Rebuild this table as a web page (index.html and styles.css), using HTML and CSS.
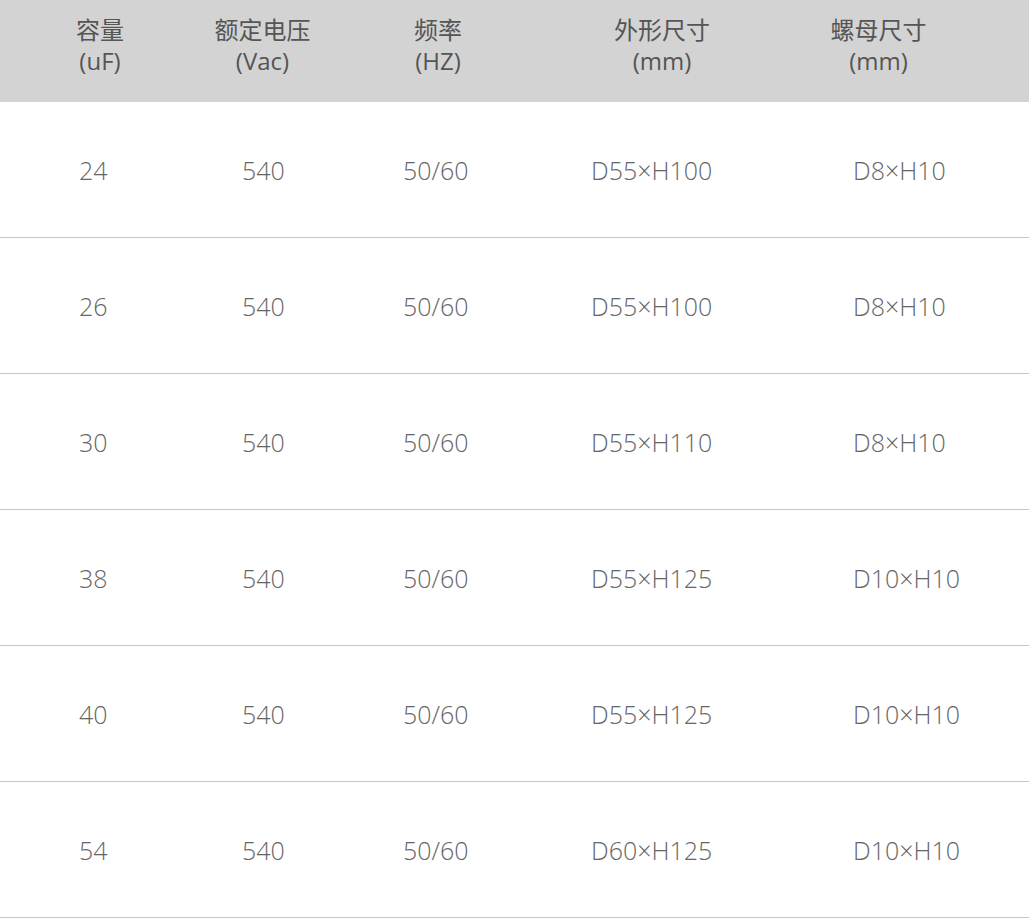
FILE: index.html
```html
<!DOCTYPE html>
<html lang="zh-CN">
<head>
<meta charset="utf-8">
<title>规格参数</title>
<link rel="stylesheet" href="styles.css">
</head>
<body>
<div class="spec">
  <div class="row head">
    <div class="cell">容量<br>(uF)</div>
    <div class="cell">额定电压<br>(Vac)</div>
    <div class="cell">频率<br>(HZ)</div>
    <div class="cell">外形尺寸<br>(mm)</div>
    <div class="cell">螺母尺寸<br>(mm)</div>
  </div>
  <div class="row">
    <div class="cell">24</div><div class="cell">540</div><div class="cell">50/60</div><div class="cell">D55×H100</div><div class="cell">D8×H10</div>
  </div>
  <div class="row">
    <div class="cell">26</div><div class="cell">540</div><div class="cell">50/60</div><div class="cell">D55×H100</div><div class="cell">D8×H10</div>
  </div>
  <div class="row">
    <div class="cell">30</div><div class="cell">540</div><div class="cell">50/60</div><div class="cell">D55×H110</div><div class="cell">D8×H10</div>
  </div>
  <div class="row">
    <div class="cell">38</div><div class="cell">540</div><div class="cell">50/60</div><div class="cell">D55×H125</div><div class="cell">D10×H10</div>
  </div>
  <div class="row">
    <div class="cell">40</div><div class="cell">540</div><div class="cell">50/60</div><div class="cell">D55×H125</div><div class="cell">D10×H10</div>
  </div>
  <div class="row">
    <div class="cell">54</div><div class="cell">540</div><div class="cell">50/60</div><div class="cell">D60×H125</div><div class="cell">D10×H10</div>
  </div>
</div>
</body>
</html>
```
FILE: styles.css
```css
html, body {
  margin: 0;
  padding: 0;
  background: #ffffff;
}

.spec {
  width: 1029px;
  font-family: "Open Sans", "Noto Sans CJK SC", sans-serif;
}

.row {
  display: grid;
  grid-template-columns: 200px 125px 226px 222px 211px 45px;
  height: 135px;
  border-bottom: 1px solid #c6c6c6;
  align-items: center;
  font-size: 25px;
  font-weight: 300;
  color: #666666;
}

.row .cell:nth-child(1) { padding-left: 79px; }
.row .cell:nth-child(2) { padding-left: 42px; }
.row .cell:nth-child(3) { padding-left: 78px; }
.row .cell:nth-child(4) { padding-left: 40px; }
.row .cell:nth-child(5) { padding-left: 80px; }

.row .cell {
  line-height: 1;
  padding-top: 2px;
}

.row.head {
  height: 102px;
  border-bottom: none;
  background: #d3d3d3;
  align-items: start;
  color: #555555;
  font-weight: 400;
  font-family: "Open Sans", "Noto Sans CJK SC", sans-serif;
}

.row.head .cell {
  padding: 14px 0 0 0;
  text-align: center;
  line-height: 31px;
  font-size: 24px;
}
```
